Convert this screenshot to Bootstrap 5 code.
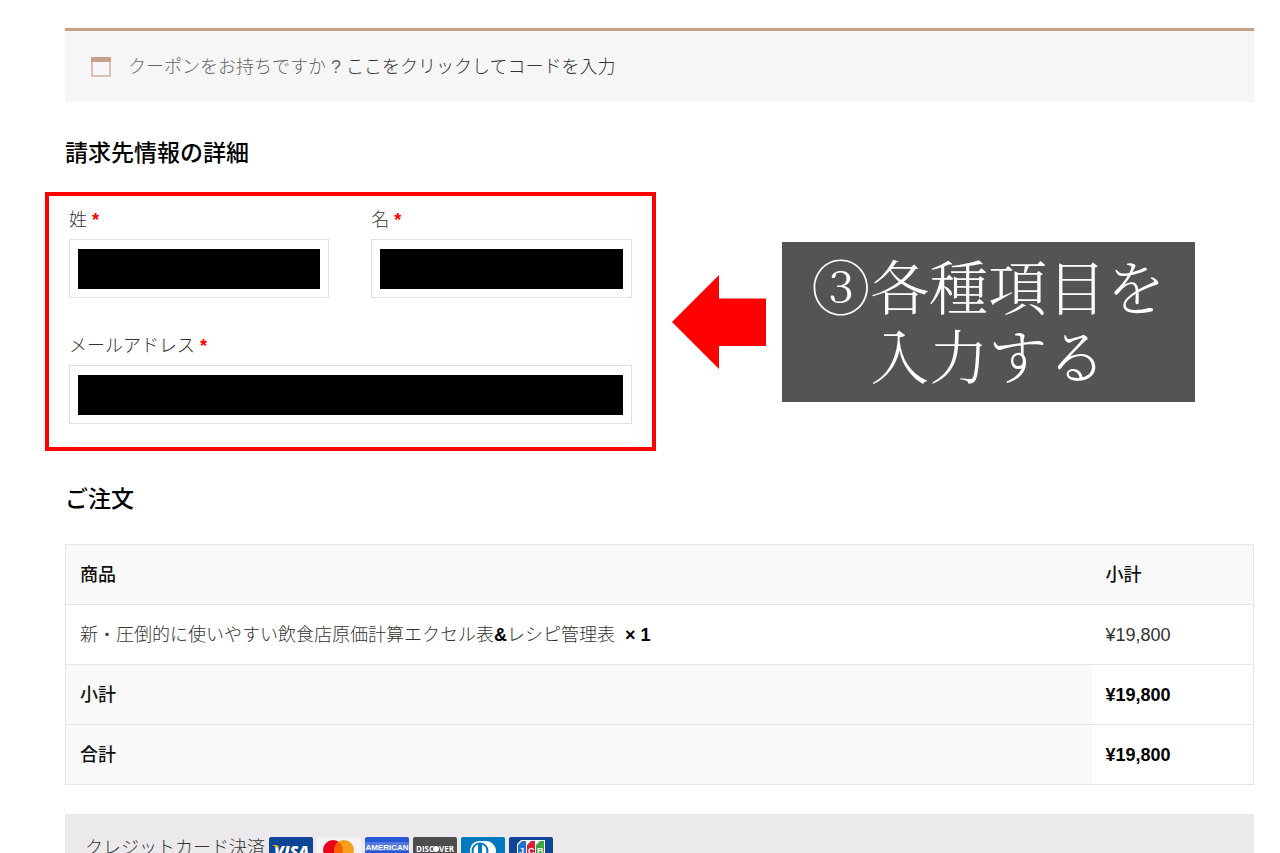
<!DOCTYPE html>
<html lang="ja">
<head>
<meta charset="utf-8">
<meta name="viewport" content="width=device-width, initial-scale=1">
<title>ご注文手続き</title>
<link rel="stylesheet" href="https://cdn.jsdelivr.net/npm/bootstrap@5.3.0/dist/css/bootstrap.min.css">
<style>
  body { font-family: "Liberation Sans", "Noto Sans CJK JP", sans-serif; font-size: 18px; line-height: 28px; font-weight: 300; color: #333; background: #fff; }
  .checkout { padding: 28px 26px 0 65px; }
  .coupon { background: #f6f6f6; border-top: 3px solid #c49f8a; padding: 22px 26px 21px; color: #666; gap: 17px; }
  .coupon a { color: #333; }
  .section-title { font-size: 23px; line-height: 32px; font-weight: 500; color: #000; }
  .billing-title { margin: 35px 0 23px; }
  .order-title { margin: 32px 0 29px; }
  .billing { margin-left: -20px; gap: 16px; }
  .fields { flex: 0 0 50.5%; border: 4px solid red; padding: 10px 20px 23px; min-width: 0; }
  .fields label { display: block; margin-bottom: 5px; }
  .fields .row { --bs-gutter-x: 42px; --bs-gutter-y: 34px; }
  .fields .form-control { height: 59px; border: 1px solid #e0e0e0; border-radius: 0; padding: 9px 8px 8px; background: #000 content-box; color: #000; }
  .req { color: red; font-weight: 700; }
  .arrow { flex: 0 0 94px; }
  .callout-note { flex: 1 1 0; margin-right: 59px; background: #545454; color: #fff; font-family: "Noto Serif CJK JP", "Noto Sans CJK JP", serif; font-size: 59px; line-height: 69px; font-weight: 300; padding: 8px 0 14px; }
  .order { border: 1px solid #e6e6e6; color: #333; margin-bottom: 29px; }
  .order th, .order td { padding: 16px 14px 15px; border-bottom: 1px solid #e6e6e6; color: inherit; background: #fff; line-height: 28px; }
  .order th { background: #f9f9f9; font-weight: 500; color: #111; }
  .order .price { width: 162px; }
  .order b, .order tfoot td { font-weight: 700; color: #000; }
  .payment { background: #ebe9eb; padding: 20px 20px; gap: 4px; }
  .cards { gap: 4px; padding-top: 3px; }
</style>
</head>
<body>
<main class="checkout">
  <div class="coupon d-flex align-items-center">
    <svg width="20" height="20" viewBox="0 0 20 20" aria-hidden="true"><path d="M1 1h18v18H1z" fill="none" stroke="#cfae9b" stroke-width="1.5"/><path d="M0 0h20v5H0z" fill="#c49f8a"/></svg>
    <div>クーポンをお持ちですか ? <a href="#" class="text-decoration-none">ここをクリックしてコードを入力</a></div>
  </div>

  <h3 class="section-title billing-title">請求先情報の詳細</h3>

  <div class="billing d-flex align-items-center">
    <form class="fields">
      <div class="row">
        <div class="col-6"><label for="sei">姓 <span class="req">*</span></label><input id="sei" type="text" class="form-control"></div>
        <div class="col-6"><label for="mei">名 <span class="req">*</span></label><input id="mei" type="text" class="form-control"></div>
        <div class="col-12"><label for="mail">メールアドレス <span class="req">*</span></label><input id="mail" type="email" class="form-control"></div>
      </div>
    </form>
    <svg class="arrow" width="94" height="94" viewBox="0 0 94 94" aria-hidden="true"><path d="M0 47 47 0V23.500H94V71H47V94Z" fill="red"/></svg>
    <div class="callout-note text-center">③各種項目を<br>入力する</div>
  </div>

  <h3 class="section-title order-title">ご注文</h3>

  <table class="order w-100">
    <thead><tr><th scope="col">商品</th><th scope="col" class="price">小計</th></tr></thead>
    <tbody><tr><td>新・圧倒的に使いやすい飲食店原価計算エクセル表<b>&amp;</b>レシピ管理表&nbsp; <b>× 1</b></td><td>¥19,800</td></tr></tbody>
    <tfoot>
      <tr><th scope="row">小計</th><td>¥19,800</td></tr>
      <tr><th scope="row">合計</th><td>¥19,800</td></tr>
    </tfoot>
  </table>

  <div class="payment d-flex">
    <span>クレジットカード決済</span>
    <span class="cards d-flex">
      <svg width="44" height="28" viewBox="0 0 44 28"><rect width="44" height="28" rx="2" fill="#0e4595"/><text x="5" y="20" font-family="Open Sans" font-size="16" font-weight="800" font-style="italic" fill="#fff">VISA</text><path d="M3 8h5l3 6C9 11 6 9 3 8z" fill="#f2ae14"/></svg>
      <svg width="44" height="28" viewBox="0 0 44 28"><rect width="44" height="28" rx="2" fill="#f4f3f4"/><circle cx="16" cy="13" r="10" fill="#eb001b"/><circle cx="27" cy="13" r="10" fill="#f79e1b"/><path d="M21.500 4.700a10 10 0 0 1 0 16.600 10 10 0 0 1 0-16.600z" fill="#ff5f00"/></svg>
      <svg width="44" height="28" viewBox="0 0 44 28"><rect width="44" height="28" rx="2" fill="#2557d6"/><path d="M0 5h44v9H0z" fill="#fff" opacity=".2"/><text x="22" y="13" text-anchor="middle" font-family="Liberation Sans" font-size="8" font-weight="700" fill="#fff">AMERICAN</text><text x="22" y="23" text-anchor="middle" font-family="Liberation Sans" font-size="8" font-weight="700" fill="#fff">EXPRESS</text></svg>
      <svg width="44" height="28" viewBox="0 0 44 28"><rect width="44" height="28" rx="2" fill="#4d4d4d"/><text x="3" y="15" font-family="Open Sans" font-size="8" font-weight="700" fill="#fff">DISC</text><circle cx="23" cy="12" r="3" fill="#fff"/><text x="26" y="15" font-family="Open Sans" font-size="8" font-weight="700" fill="#fff">VER</text></svg>
      <svg width="44" height="28" viewBox="0 0 44 28"><rect width="44" height="28" rx="2" fill="#0079be"/><path d="M19 4h5c7 0 11 5 11 10s-4 10-11 10h-5C13 24 9 20 9 14S13 4 19 4z" fill="#fff"/><circle cx="19" cy="14" r="8.500" fill="#0079be"/><path d="M17 7.500v13a7 7 0 0 1 0-13zM21 7.500a7 7 0 0 1 0 13z" fill="#fff"/></svg>
      <svg width="44" height="28" viewBox="0 0 44 28"><rect width="44" height="28" rx="2" fill="#0e4595"/><path d="M12 3h24v18l-4 4H8V7z" fill="#fff"/><path d="M13 4h4v17l-3 3H9V8z" fill="#1f72cd"/><path d="M22 4h4v17l-3 3h-5V8z" fill="#d8203a"/><path d="M31 4h4v17l-3 3h-5V8z" fill="#3ba53b"/><text x="10" y="17" font-family="Liberation Sans" font-size="9" font-weight="700" fill="#fff">J</text><text x="19" y="17" font-family="Liberation Sans" font-size="9" font-weight="700" fill="#fff">C</text><text x="28" y="17" font-family="Liberation Sans" font-size="9" font-weight="700" fill="#fff">B</text></svg>
    </span>
  </div>
</main>
<script src="https://cdn.jsdelivr.net/npm/bootstrap@5.3.0/dist/js/bootstrap.bundle.min.js"></script>
</body>
</html>
